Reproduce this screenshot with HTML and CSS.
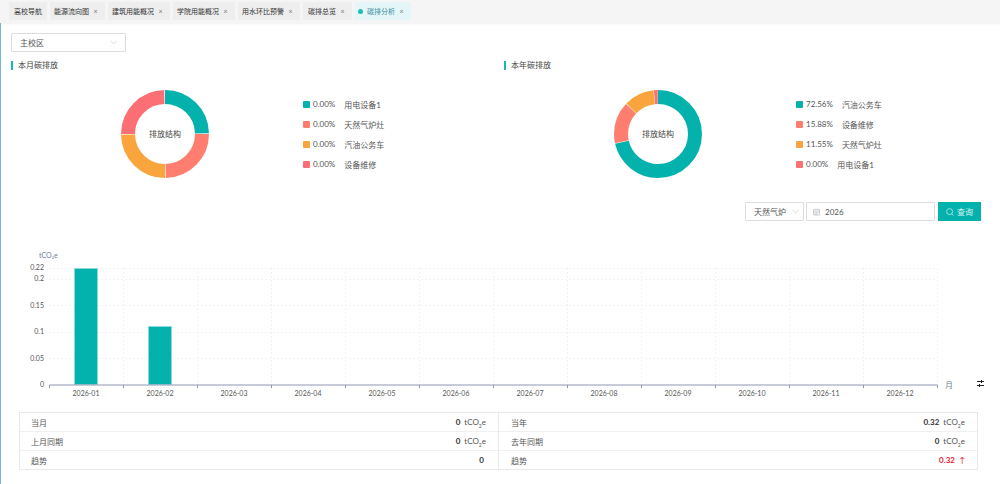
FILE: index.html
```html
<!DOCTYPE html>
<html lang="zh-CN">
<head>
<meta charset="utf-8">
<title>碳排分析</title>
<link rel="stylesheet" href="styles.css">
</head>
<body>
<div class="app">
  <nav class="tabs">
    <div class="tab tab-home">高校导航</div>
    <div class="tab">能源流向图<span class="x">×</span></div>
    <div class="tab">建筑用能概况<span class="x">×</span></div>
    <div class="tab">学院用能概况<span class="x">×</span></div>
    <div class="tab">用水环比预警<span class="x">×</span></div>
    <div class="tab tab-wide">碳排总览<span class="x">×</span></div>
    <div class="tab tab-active"><i class="dot"></i>碳排分析<span class="x">×</span></div>
  </nav>
  <main class="main">
    <div class="select campus">主校区
      <svg class="chev" viewBox="0 0 8 5"><path d="M.5.5 4 4 7.500.5"/></svg>
    </div>
    <div class="panels">
      <section class="panel">
        <h2 class="title">本月碳排放</h2>
        <div class="panel-body">
          <svg class="donut" viewBox="0 0 90 90">
            <g transform="rotate(-90 45 45)">
              <circle class="ring c1" cx="45" cy="45" r="37" pathLength="100" stroke-dasharray="24.7 75.3" stroke-dashoffset="0"/>
              <circle class="ring c2" cx="45" cy="45" r="37" pathLength="100" stroke-dasharray="24.7 75.3" stroke-dashoffset="-25"/>
              <circle class="ring c3" cx="45" cy="45" r="37" pathLength="100" stroke-dasharray="24.7 75.3" stroke-dashoffset="-50"/>
              <circle class="ring c4" cx="45" cy="45" r="37" pathLength="100" stroke-dasharray="24.7 75.3" stroke-dashoffset="-75"/>
            </g>
            <text class="donut-label" x="45" y="48">排放结构</text>
          </svg>
          <ul class="legend">
            <li><i class="sw s1"></i><span>0.00%</span><span>用电设备1</span></li>
            <li><i class="sw s2"></i><span>0.00%</span><span>天然气炉灶</span></li>
            <li><i class="sw s3"></i><span>0.00%</span><span>汽油公务车</span></li>
            <li><i class="sw s4"></i><span>0.00%</span><span>设备维修</span></li>
          </ul>
        </div>
      </section>
      <section class="panel">
        <h2 class="title">本年碳排放</h2>
        <div class="panel-body">
          <svg class="donut" viewBox="0 0 90 90">
            <g transform="rotate(-90 45 45)">
              <circle class="ring c1" cx="45" cy="45" r="37" pathLength="100" stroke-dasharray="71.4 28.6" stroke-dashoffset="0"/>
              <circle class="ring c2" cx="45" cy="45" r="37" pathLength="100" stroke-dasharray="15.4 84.6" stroke-dashoffset="-71.6"/>
              <circle class="ring c3" cx="45" cy="45" r="37" pathLength="100" stroke-dasharray="11.1 88.9" stroke-dashoffset="-87.2"/>
              <circle class="ring c4" cx="45" cy="45" r="37" pathLength="100" stroke-dasharray="1.4 98.6" stroke-dashoffset="-98.5"/>
            </g>
            <text class="donut-label" x="45" y="48">排放结构</text>
          </svg>
          <ul class="legend">
            <li><i class="sw s1"></i><span>72.56%</span><span>汽油公务车</span></li>
            <li><i class="sw s2"></i><span>15.88%</span><span>设备维修</span></li>
            <li><i class="sw s3"></i><span>11.55%</span><span>天然气炉灶</span></li>
            <li><i class="sw s4"></i><span>0.00%</span><span>用电设备1</span></li>
          </ul>
        </div>
      </section>
    </div>
    <div class="filters">
      <div class="select fuel">天然气炉
        <svg class="chev" viewBox="0 0 8 5"><path d="M.5.5 4 4 7.500.5"/></svg>
      </div>
      <div class="date">
        <svg class="cal" viewBox="0 0 8 8"><rect x=".5" y="1" width="7" height="6.500" rx=".6"/><path d="M.5 3h7M2 5h4M2 6.200h3"/></svg>2026
      </div>
      <div class="btn">
        <svg class="search" viewBox="0 0 8 8"><circle cx="3.600" cy="3.600" r="3"/><path d="M5.800 5.800 7.500 7.500"/></svg>查询
      </div>
    </div>
    <svg class="chart" viewBox="0 245 1000 155">
      <text class="unit" x="39" y="258">tCO₂e</text>
      <g class="grid">
        <path d="M49 268.500H937M49 279.500H937M49 305.500H937M49 332.500H937M49 358.500H937"/>
        <path d="M123.500 268V385M197.500 268V385M271.500 268V385M345.500 268V385M419.500 268V385M493.500 268V385M567.500 268V385M641.500 268V385M715.500 268V385M789.500 268V385M863.500 268V385M937.500 268V385"/>
      </g>
      <g class="ylabels">
        <text x="44" y="270">0.22</text>
        <text x="44" y="281">0.2</text>
        <text x="44" y="308">0.15</text>
        <text x="44" y="334">0.1</text>
        <text x="44" y="361">0.05</text>
        <text x="44" y="387">0</text>
      </g>
      <rect class="bar" x="74.500" y="268.500" width="23" height="116"/>
      <rect class="bar" x="148.500" y="326.500" width="23" height="58"/>
      <path class="axis" d="M49.500 388V385H937.500V388M123.500 385V388M197.500 385V388M271.500 385V388M345.500 385V388M419.500 385V388M493.500 385V388M567.500 385V388M641.500 385V388M715.500 385V388M789.500 385V388M863.500 385V388"/>
      <g class="xlabels">
        <text x="86" y="396">2026-01</text>
        <text x="160" y="396">2026-02</text>
        <text x="234" y="396">2026-03</text>
        <text x="308" y="396">2026-04</text>
        <text x="382" y="396">2026-05</text>
        <text x="456" y="396">2026-06</text>
        <text x="530" y="396">2026-07</text>
        <text x="604" y="396">2026-08</text>
        <text x="678" y="396">2026-09</text>
        <text x="752" y="396">2026-10</text>
        <text x="826" y="396">2026-11</text>
        <text x="900" y="396">2026-12</text>
      </g>
      <text class="month" x="945" y="388">月</text>
      <path class="tool" d="M977 381.500H984M977 385.500H984M981.500 380V383M979.500 384V387"/>
    </svg>
    <div class="stats">
      <div class="col">
        <div class="row"><span>当月</span><span class="val"><b>0</b> tCO<sub>2</sub>e</span></div>
        <div class="row"><span>上月同期</span><span class="val"><b>0</b> tCO<sub>2</sub>e</span></div>
        <div class="row"><span>趋势</span><span class="val"><b>0</b></span></div>
      </div>
      <div class="col">
        <div class="row"><span>当年</span><span class="val"><b>0.32</b> tCO<sub>2</sub>e</span></div>
        <div class="row"><span>去年同期</span><span class="val"><b>0</b> tCO<sub>2</sub>e</span></div>
        <div class="row"><span>趋势</span><span class="val up"><b>0.32</b> ↑</span></div>
      </div>
    </div>
  </main>
</div>
</body>
</html>
```

FILE: styles.css
```css
* { box-sizing: border-box; }
html, body { margin: 0; padding: 0; }
body {
  width: 1000px;
  height: 484px;
  overflow: hidden;
  background: #fff;
  color: #444;
  font-family: "Lato", "Noto Sans CJK SC", sans-serif;
  font-size: 8px;
}
.app { height: 484px; }

.tabs {
  display: flex;
  gap: 3px;
  height: 23px;
  padding: 2px 0 0 9px;
  background: #f5f5f5;
  box-shadow: 0 1px 2px rgba(0, 0, 0, .06);
  position: relative;
}
.tab {
  display: flex;
  align-items: center;
  height: 18px;
  padding: 0 7px 0 4px;
  background: #eee;
  color: #333;
  font-size: 7px;
}
.tab-home { padding: 0 5px; }
.tab-wide { padding-left: 5px; }
.tab-active { padding-left: 3px; background: #e5f6f8; color: #3a8c9c; }
.dot {
  width: 5px;
  height: 5px;
  margin-right: 4px;
  border-radius: 50%;
  background: #1dbcba;
}
.x {
  width: 5px;
  margin-left: 4px;
  color: #777;
  font-size: 7px;
  text-align: center;
}

.main {
  height: 461px;
  box-shadow: inset 1px 0 0 #6fbccb;
  overflow: hidden;
}

.select, .date {
  display: flex;
  align-items: center;
  height: 19px;
  border: 1px solid #ddd;
  border-radius: 1px;
  background: #fff;
}
.select { justify-content: space-between; }
.campus {
  width: 115px;
  margin: 10px 0 0 11px;
  padding: 0 8px;
  font-size: 8px;
  color: #555;
}
.chev { width: 7px; height: 5px; fill: none; stroke: #c4c4c4; stroke-width: .7; }

.panels { display: grid; grid-template-columns: 493px 1fr; margin: 9px 0 0 11px; }
.title {
  margin: 0;
  padding-left: 5px;
  border-left: 2px solid #1bb5b3;
  height: 9px;
  line-height: 9px;
  font-size: 8px;
  font-weight: 400;
  color: #444;
}
.panel-body { display: flex; margin-top: 19px; }
.donut { width: 90px; height: 90px; margin-left: 109px; flex: none; }
.ring { fill: none; stroke-width: 14; }
.c1 { stroke: #03b1ad; }
.c2 { stroke: #ff7e6f; }
.c3 { stroke: #f9a43d; }
.c4 { stroke: #fb6f75; }
.donut-label { font-size: 8px; fill: #444; text-anchor: middle; }

.legend {
  list-style: none;
  margin: 10px 0 0 93px;
  padding: 0;
  display: flex;
  flex-direction: column;
  gap: 10px;
}
.legend li {
  display: flex;
  align-items: center;
  gap: 9px;
  height: 10px;
  font-size: 8px;
  color: #555;
}
.sw { width: 7px; height: 7px; border-radius: 1px; margin-right: -6px; }
.s1 { background: #03b1ad; }
.s2 { background: #ff7e6f; }
.s3 { background: #f9a43d; }
.s4 { background: #fb6f75; }

.filters { display: flex; justify-content: flex-end; gap: 2px; margin: 23px 19px 0 0; }
.fuel { width: 59px; padding: 0 4px 0 8px; font-size: 8px; color: #555; }
.date {
  width: 129px;
  padding-left: 6px;
  gap: 5px;
  font-size: 8px;
  color: #555;
}
.cal { width: 7px; height: 8px; fill: none; stroke: #b5b5b5; stroke-width: .8; }
.btn {
  display: flex;
  align-items: center;
  justify-content: center;
  gap: 3px;
  width: 43px;
  height: 19px;
  margin-left: 1px;
  background: #03b1ad;
  color: #d8f4f3;
  font-size: 8px;
}
.search { width: 8px; height: 8px; fill: none; stroke: #d8f4f3; stroke-width: .7; }

.chart { display: block; width: 1000px; height: 155px; margin-top: 24px; }
.chart text { font-family: "Lato", "Noto Sans CJK SC", sans-serif; }
.unit { font-size: 7px; fill: #6f7f95; }
.grid path { fill: none; stroke: #f3f3f3; stroke-width: 1; stroke-dasharray: 2 2; }
.ylabels text { font-size: 7px; fill: #555; text-anchor: end; }
.xlabels text { font-size: 7px; fill: #555; text-anchor: middle; }
.bar { fill: #03b1ad; stroke: #8fdcda; stroke-width: .6; }
.axis { fill: none; stroke: #8f97b3; stroke-width: 1; }
.month { font-size: 8px; fill: #6f7f95; }
.tool { fill: none; stroke: #222; stroke-width: 1; }

.stats {
  display: grid;
  grid-template-columns: 478px 1fr;
  width: 959px;
  height: 58px;
  margin: 12px 0 0 19px;
  border: 1px solid #e8e8e8;
  font-size: 8px;
  color: #555;
}
.col + .col { border-left: 1px solid #e8e8e8; }
.col + .col .row { padding-left: 12px; }
.row {
  display: flex;
  justify-content: space-between;
  align-items: center;
  height: 19px;
  padding: 0 12px 0 11px;
  border-bottom: 1px solid #f0f0f0;
}
.row:last-child { border-bottom: 0; height: 18px; }
.val b { margin-right: 2px; font-weight: 700; color: #333; }
.val sub { font-size: 5px; line-height: 0; }
.up, .up b { color: #e8202f; }
```
